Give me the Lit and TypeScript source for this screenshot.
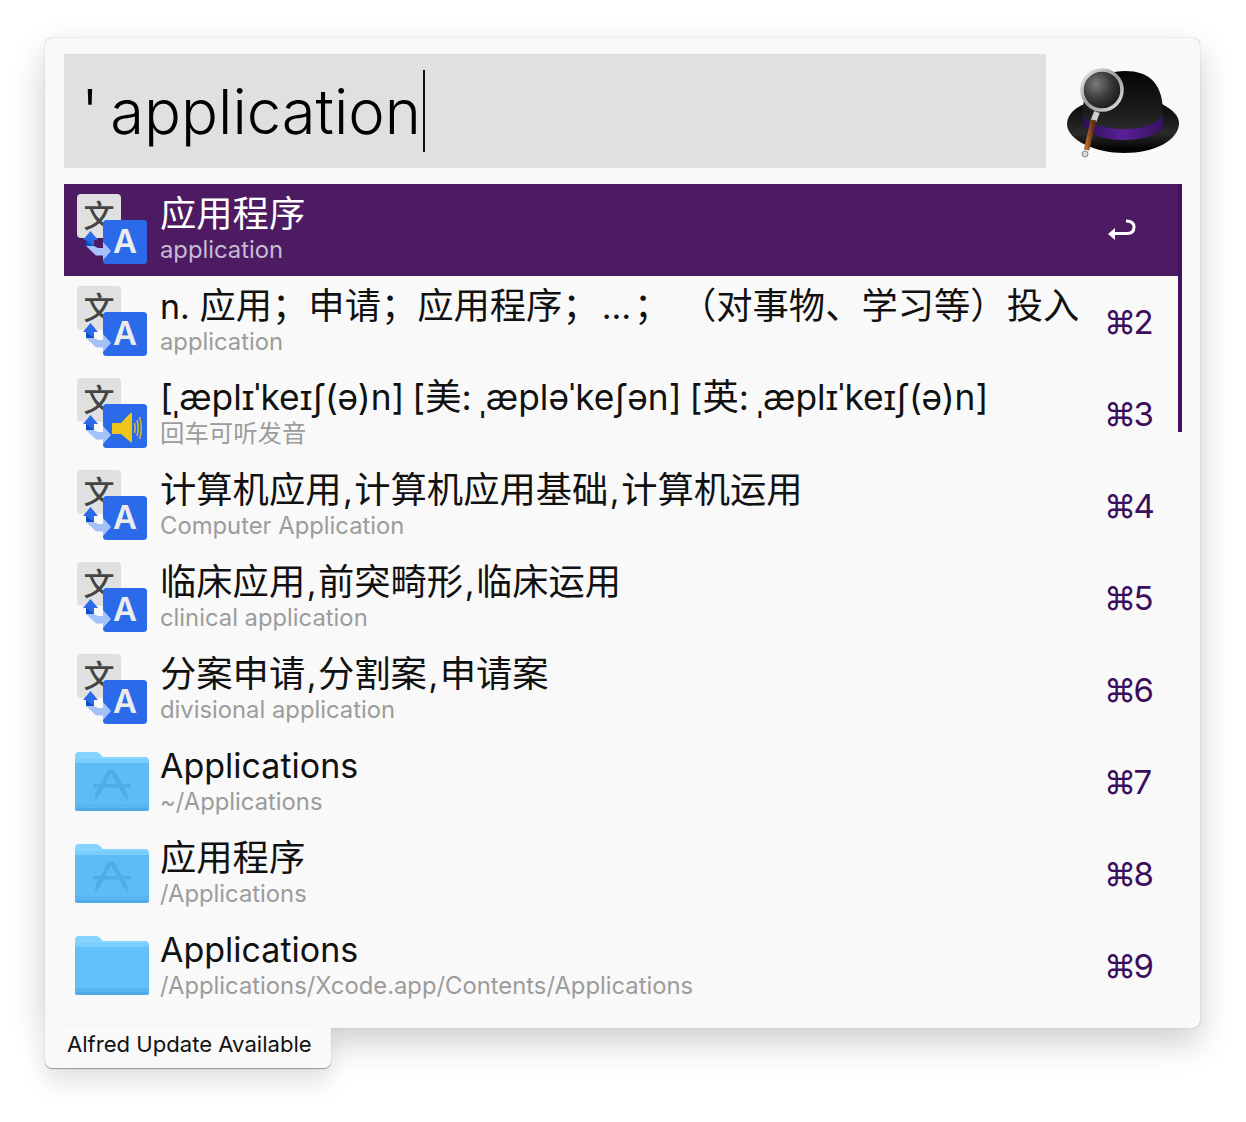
import { LitElement, html, css, svg } from "lit";
import { customElement } from "lit/decorators.js";

type Row = { title: string; sub: string; icon: "tr" | "sound" | "app" | "folder"; key: string };

const rows: Row[] = [
  { title: "应用程序", sub: "application", icon: "tr", key: "" },
  { title: "n. 应用；申请；应用程序；…； （对事物、学习等）投入", sub: "application", icon: "tr", key: "2" },
  { title: "[ˌæplɪˈkeɪʃ(ə)n] [美: ˌæpləˈkeʃən] [英: ˌæplɪˈkeɪʃ(ə)n]", sub: "回车可听发音", icon: "sound", key: "3" },
  { title: "计算机应用,计算机应用基础,计算机运用", sub: "Computer Application", icon: "tr", key: "4" },
  { title: "临床应用,前突畸形,临床运用", sub: "clinical application", icon: "tr", key: "5" },
  { title: "分案申请,分割案,申请案", sub: "divisional application", icon: "tr", key: "6" },
  { title: "Applications", sub: "~/Applications", icon: "app", key: "7" },
  { title: "应用程序", sub: "/Applications", icon: "app", key: "8" },
  { title: "Applications", sub: "/Applications/Xcode.app/Contents/Applications", icon: "folder", key: "9" },
];

// latin and cjk need different sizes to hit the original widths
function runs(text: string) {
  return text.split(/([\u3000-\u30ff\u3400-\u9fff\uff00-\uffef]+)/).map((part, i) => {
    if (i % 2) return html`<span class="cjk">${part}</span>`;
    if (part === ",") return html`<span class="comma">,</span>`;
    if (part === "…") return html`<span class="ell">…</span>`;
    return part;
  });
}

function translateIcon(sound: boolean) {
  return html`<svg class="icon" viewBox="0 0 74 74" width="74" height="74">
    <rect x="2" y="1" width="44" height="44" rx="4" fill="#e0e0e0" />
    <text x="24" y="34" font-size="31" font-weight="500" text-anchor="middle" fill="#444"
      font-family="Noto Sans CJK SC, sans-serif">文</text>
    <path d="M15.5 38 L23 47 H19 V53 H11 V47 H8 Z" fill="#2a6ae8" />
    <path d="M11 47 V53 L19 53 Z" fill="#0f4fc4" />
    <rect x="28" y="27" width="44" height="44" rx="3.5" fill="#2b6be9" />
    <path d="M11 53 H19 L23 55 H28 V49 L36 58 L28 67 V62.5 H21 Z" fill="#a6c2fb" />
    ${sound
      ? svg`<path d="M37 47 Q37 46 38 46 H46 L55.500 36 Q57 34.500 57 37 V64 Q57 66.500 55.500 65 L46 57 H38 Q37 57 37 56 Z" fill="#eec51a" />
          <path d="M59.500 46 Q61 51 59.500 56 M62 43 Q64.500 51 62 59 M64.500 40 Q68 51 64.500 62" stroke="#eec51a" stroke-width="1.300" fill="none" />`
      : svg`<text x="50" y="60" font-size="33" font-weight="600" text-anchor="middle" fill="#ececec"
          font-family="Inter, sans-serif">A</text>`}
  </svg>`;
}

function folderIcon(app: boolean) {
  return html`<svg class="icon" viewBox="0 0 74 62" width="74" height="62">
    <path d="M0 5 Q0 1 4 1 H21 Q24 1 26 4 L28 6 H70 Q74 6 74 10 V20 H0 Z" fill="#85d4ff" />
    <path d="M0 11 Q0 8 3 8 H71 Q74 8 74 11 V57 Q74 60 71 60 H3 Q0 60 0 57 Z" fill="#7bcdfd" />
    <path d="M0 12 H74 V57 Q74 60 71 60 H3 Q0 60 0 57 Z" fill="${app ? "#5cbcf4" : "#63c1fa"}" />
    <rect x="0" y="53" width="74" height="4" fill="#58b5ee" />
    <path d="M0 57 H74 Q74 60 71 60 H3 Q0 60 0 57 Z" fill="#4fabe5" />
    ${app
      ? svg`<g fill="#4badea">
          <rect x="18" y="33" width="38" height="3.500" />
          <path d="M33.500 18 L37 20 L24.500 44 L20 50 L20.500 42 Z" />
          <path d="M38.500 18 L35 20 L48 44 L53 50 L52 42 Z" />
        </g>`
      : ""}
  </svg>`;
}

// drawn in screenshot coordinates, the viewBox is the icon's spot on the page
function hat() {
  return html`<svg viewBox="1060 60 125 105" width="125" height="105" class="hat">
    <defs>
      <linearGradient id="crown" x1="0" y1="0" x2="0" y2="1">
        <stop offset="0" stop-color="#060606" />
        <stop offset="0.6" stop-color="#1a1a1a" />
        <stop offset="1" stop-color="#2e2e2e" />
      </linearGradient>
      <linearGradient id="brim" x1="0" y1="0" x2="0" y2="1">
        <stop offset="0" stop-color="#0a0a0a" />
        <stop offset="0.6" stop-color="#2a2a2a" />
        <stop offset="0.9" stop-color="#050505" />
      </linearGradient>
      <linearGradient id="band" x1="0" y1="0" x2="1" y2="0">
        <stop offset="0" stop-color="#2c1050" />
        <stop offset="0.5" stop-color="#5a1f96" />
        <stop offset="1" stop-color="#34135f" />
      </linearGradient>
      <radialGradient id="lens" cx="0.35" cy="0.35" r="0.75">
        <stop offset="0" stop-color="#7a7a7a" />
        <stop offset="0.5" stop-color="#3a3a3a" />
        <stop offset="0.85" stop-color="#1e1e1e" />
        <stop offset="1" stop-color="#4a4a4a" />
      </radialGradient>
      <linearGradient id="ring" x1="0" y1="0" x2="1" y2="1">
        <stop offset="0" stop-color="#ececec" />
        <stop offset="0.5" stop-color="#9a9a9a" />
        <stop offset="1" stop-color="#e4e4e4" />
      </linearGradient>
      <linearGradient id="wood" x1="0" y1="0" x2="1" y2="0">
        <stop offset="0" stop-color="#b4692e" />
        <stop offset="1" stop-color="#5a2f12" />
      </linearGradient>
    </defs>
    <path d="M1082 105 C1072 110 1067 117 1067 124 C1067 140 1095 153 1124 153 C1155 153 1179 140 1179 123 C1179 116 1173 110 1162 104 Z" fill="url(#brim)" />
    <path d="M1082 116 C1083 85 1100 71 1125 71 C1150 71 1164 84 1163 116 C1163 130 1140 134 1120 134 C1100 134 1084 128 1082 116 Z" fill="url(#crown)" />
    <path d="M1082 116 C1092 126 1112 130 1128 129 C1145 128 1156 124 1163 116 V128 C1156 136 1140 140 1124 140 C1104 140 1090 134 1084 127 Z" fill="url(#band)" />
    <path d="M1097 112 L1093.500 121" stroke="#cfcfcf" stroke-width="6" />
    <path d="M1093.500 120 L1086.500 150" stroke="url(#wood)" stroke-width="5.500" />
    <circle cx="1085" cy="154" r="3" fill="#d8d8d8" stroke="#888" stroke-width="1" />
    <circle cx="1102" cy="90" r="20" fill="url(#lens)" stroke="url(#ring)" stroke-width="3.500" />
  </svg>`;
}

@customElement("app-root")
export class AppRoot extends LitElement {
  static styles = css`
    :host {
      display: block;
      height: 1122px;
      padding: 38px 46px 0 45px;
      box-sizing: border-box;
      background: #fff;
      font-family: Inter, "Noto Sans CJK SC", sans-serif;
    }
    .window {
      position: relative;
      height: 990px;
      box-sizing: border-box;
      padding: 16px 18px 0 19px;
      background: #f9f9f9;
      border-radius: 7px 7px 7px 0;
      box-shadow: 0 0 1px rgba(0, 0, 0, 0.45), 0 14px 34px rgba(0, 0, 0, 0.2);
    }
    .top {
      display: flex;
      align-items: center;
      gap: 14px;
      height: 114px;
    }
    .search {
      flex: 0 0 982px;
      height: 114px;
      box-sizing: border-box;
      padding-left: 17px;
      display: flex;
      align-items: center;
      background: #e0e0e0;
      font-size: 61.5px;
      font-weight: 300;
      word-spacing: -6px;
      color: #000;
    }
    .caret {
      width: 2px;
      height: 82px;
      margin-left: 2px;
      background: #111;
    }
    .hat {
      display: block;
      flex: none;
      margin-top: 3px;
    }
    .list {
      position: relative;
      margin-top: 16px;
    }
    .row {
      display: flex;
      align-items: center;
      height: 92px;
      box-sizing: border-box;
      padding-left: 11px;
      color: #111;
    }
    .row.sel {
      background: #4c1b62;
      color: #fff;
    }
    .ico {
      flex: 0 0 74px;
      display: flex;
      justify-content: center;
    }
    .icon {
      display: block;
      overflow: visible;
    }
    .text {
      flex: 1;
      align-self: flex-start;
      padding-top: 8px;
      margin-left: 11px;
      min-width: 0;
    }
    .title {
      font-size: 34px;
      line-height: 44px;
      height: 44px;
      white-space: nowrap;
    }
    .title .cjk {
      font-size: 36.3px;
    }
    .title .comma {
      margin: 0 1.5px;
    }
    .title .ell {
      padding: 0 3px;
    }
    .title.ipa {
      font-size: 35.3px;
      word-spacing: -2px;
      margin-top: -1px;
    }
    .sub {
      font-size: 23.8px;
      line-height: 28px;
      height: 28px;
      white-space: nowrap;
      color: #9c9c9c;
    }
    .sub .cjk {
      font-size: 24.4px;
    }
    .sel .sub {
      color: #c9bad3;
    }
    .key {
      flex: 0 0 78px;
      font-size: 33px;
      color: #3b0f5c;
      display: flex;
      align-items: center;
    }
    .key .cmd {
      font-size: 32px;
      letter-spacing: -2.5px;
    }
    .ret {
      display: block;
      margin-left: 3px;
    }
    .bar {
      position: absolute;
      top: 0;
      right: 0;
      width: 4px;
      height: 248px;
      background: #43125f;
    }
    .tab {
      position: absolute;
      left: 0;
      top: 990px;
      width: 286px;
      height: 40px;
      box-sizing: border-box;
      padding: 0 0 8px 22px;
      display: flex;
      align-items: center;
      font-size: 22.1px;
      color: #111;
      background: #f9f9f9;
      border-radius: 0 0 7px 7px;
      box-shadow: 0 1px 1px rgba(0, 0, 0, 0.35), 0 14px 24px rgba(0, 0, 0, 0.12);
    }
  `;

  renderIcon(r: Row) {
    if (r.icon === "tr") return translateIcon(false);
    if (r.icon === "sound") return translateIcon(true);
    return folderIcon(r.icon === "app");
  }

  render() {
    return html`<div class="window">
      <div class="top">
        <div class="search"><span>' application</span><span class="caret"></span></div>
        ${hat()}
      </div>
      <div class="list">
        ${rows.map(
          (r, i) => html`<div class="row ${i === 0 ? "sel" : ""}">
            <div class="ico">${this.renderIcon(r)}</div>
            <div class="text">
              <div class="title ${r.icon === "sound" ? "ipa" : ""}">${runs(r.title)}</div>
              <div class="sub">${runs(r.sub)}</div>
            </div>
            <div class="key">
              ${r.key
                ? html`<span class="cmd">⌘</span><span>${r.key}</span>`
                : html`<svg class="ret" width="30" height="26" viewBox="0 0 30 26">
                    <path d="M6 16.500 H20 Q27 16.500 27 10 Q27 4 19 4" fill="none" stroke="#fff" stroke-width="3" />
                    <path d="M1 17 L8 11 V23 Z" fill="#fff" />
                  </svg>`}
            </div>
          </div>`
        )}
        <div class="bar"></div>
      </div>
      <div class="tab">Alfred Update Available</div>
    </div>`;
  }
}
